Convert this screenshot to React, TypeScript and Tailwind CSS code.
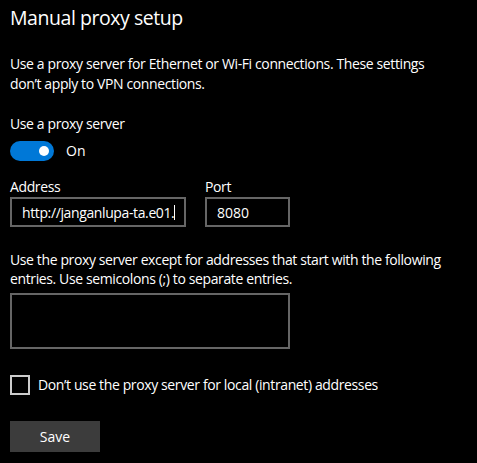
import { useState } from 'react'

const font = { fontFamily: '"Segoe UI", "Open Sans", "Noto Sans", sans-serif' }

export default function App() {
  const [enabled, setEnabled] = useState(true)
  const [local, setLocal] = useState(false)

  return (
    <div className="min-h-[463px] w-[477px] bg-black pl-[10px] pt-[4px] text-white" style={font}>
      <h1 className="text-[19.5px] leading-[28px] font-normal tracking-[-0.45px]">Manual proxy setup</h1>

      <p className="mt-[22px] text-[14px] leading-[20px] tracking-[-0.38px]">
        Use a proxy server for Ethernet or Wi-Fi connections. These settings
        <br />
        don’t apply to VPN connections.
      </p>

      <p className="mt-[20px] text-[14px] leading-[20px] tracking-[-0.38px]">Use a proxy server</p>

      {/* toggle */}
      <button
        onClick={() => setEnabled(!enabled)}
        className="mt-[7px] flex items-center gap-[12px]"
      >
        <span
          className={`flex h-[20px] w-[44px] items-center rounded-full px-[5px] ${
            enabled ? 'justify-end bg-[#0078d7]' : 'justify-start border-2 border-white bg-black'
          }`}
        >
          <span className="h-[10px] w-[10px] rounded-full bg-white" />
        </span>
        <span className="text-[14px] leading-[20px]">{enabled ? 'On' : 'Off'}</span>
      </button>

      <div className="mt-[16px] flex gap-[19px]">
        <div>
          <label className="block text-[14px] leading-[20px] tracking-[-0.38px]">Address</label>
          <div className="flex h-[30px] w-[176px] items-center overflow-hidden whitespace-nowrap border-2 border-[#666] pl-[10px] text-[14px] tracking-[-0.38px]">
            http://janganlupa-ta.e01.<span className="inline-block h-[15px] w-px bg-white" />
          </div>
        </div>
        <div>
          <label className="block text-[14px] leading-[20px] tracking-[-0.38px]">Port</label>
          <div className="flex h-[30px] w-[85px] items-center border-2 border-[#666] pl-[10px] text-[14px]">
            8080
          </div>
        </div>
      </div>

      <p className="mt-[23px] text-[14px] leading-[19px] tracking-[-0.38px]">
        Use the proxy server except for addresses that start with the following
        <br />
        entries. Use semicolons (;) to separate entries.
      </p>

      <div className="mt-[5px] h-[56px] w-[280px] border-2 border-[#666]" />

      <label className="mt-[26px] flex cursor-pointer items-center gap-[8px]" onClick={() => setLocal(!local)}>
        <span className="h-[20px] w-[20px] border-2 border-[#ccc]" />
        <span className="text-[14px] leading-[20px] tracking-[-0.38px]">
          Don’t use the proxy server for local (intranet) addresses
        </span>
      </label>

      <button className="mt-[26px] h-[31px] w-[90px] bg-[#3c3c3c] text-[14px]">Save</button>
    </div>
  )
}
